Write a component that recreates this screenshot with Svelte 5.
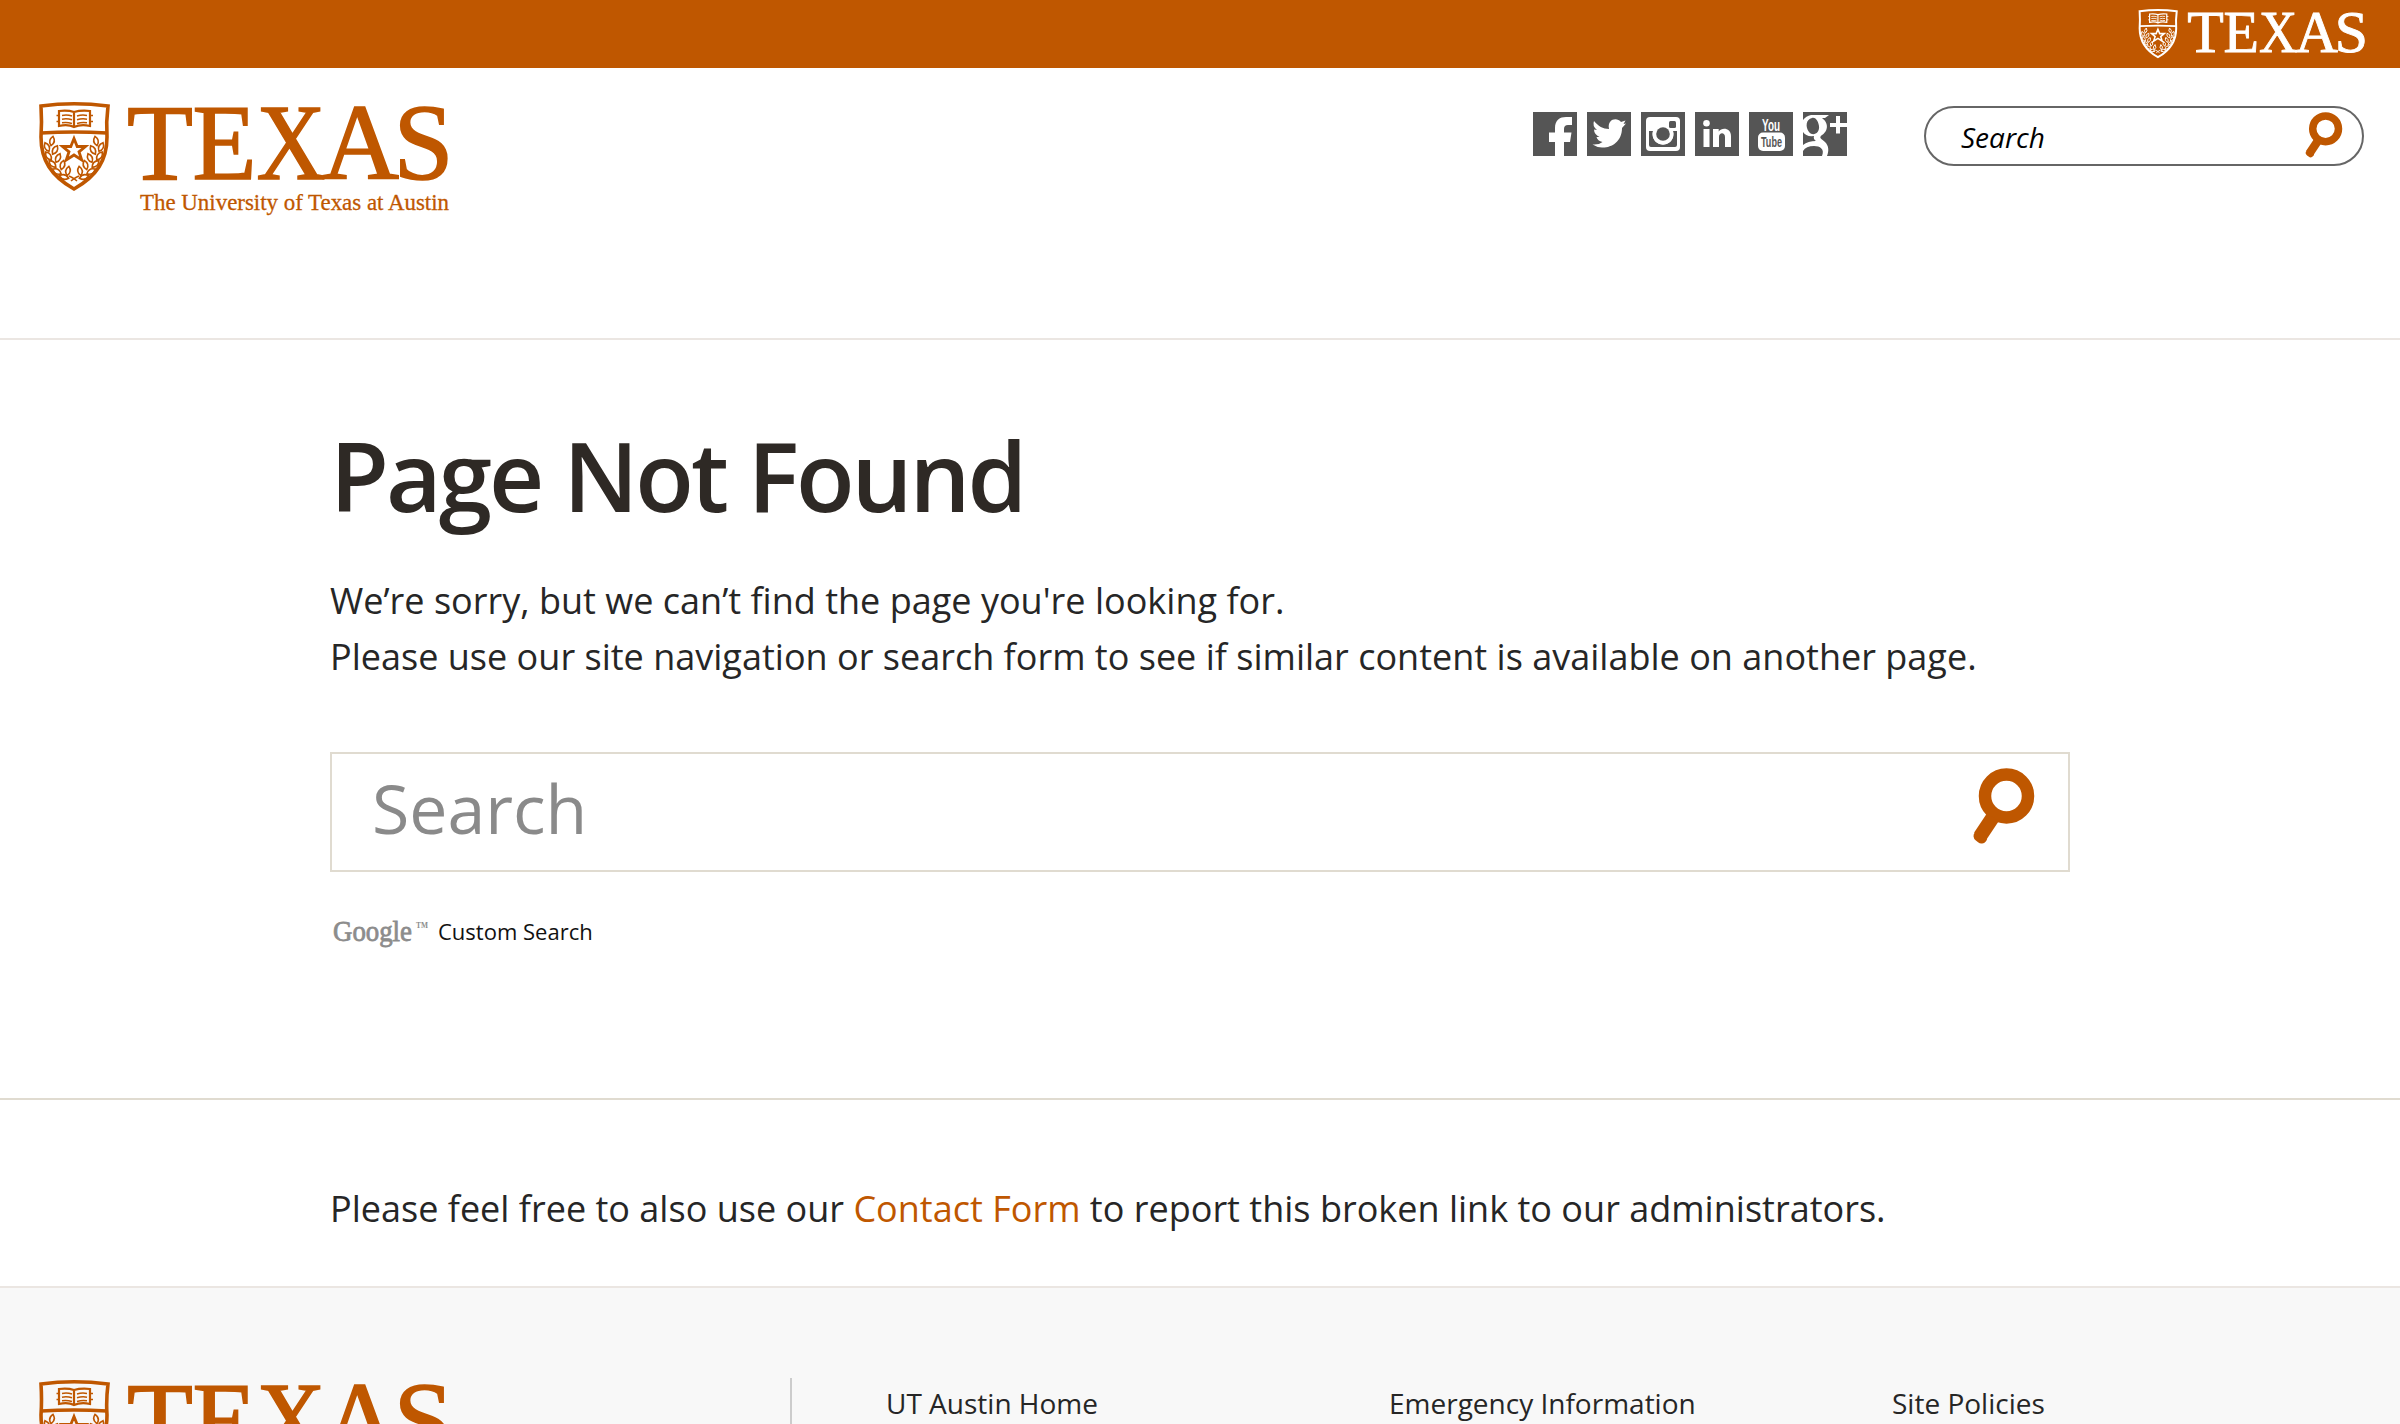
<script>
  const leaves = [
    [13, 39, 12], [8, 45, -25], [16, 48, 30], [9.5, 54, -35], [19, 56, 25],
    [13.5, 62, -45], [23.5, 63, 15], [18, 69.5, -60], [29, 69, 10], [25, 75, -75]
  ];
  const letters = [['T', 89, 66], ['E', 154.5, 64], ['X', 218.5, 69], ['A', 284, 77], ['S', 355.5, 60]];
  const LINKS = ['UT Austin Home', 'Emergency Information', 'Site Policies'];
</script>

{#snippet shield()}
  <g fill="none" stroke="currentColor" transform="translate(1 0)">
    <path stroke-width="3.6" d="M2 4Q35 -.5 69 4Q67 20 68 35C68 58 58 74 35 87C12 74 2 58 2 35Q3 20 2 4Z" />
    <path stroke-width="3.4" d="M2 31Q35 29 68 31" />
    <path stroke-width="2.2" d="M20 9Q29 8 35 10Q42 8 51 9V24Q42 22 35 25Q29 22 20 24ZM35 10V25" />
    <path stroke-width="1.5" d="M23 13.5Q28 12.5 33 14M23 17.2Q28 16.2 33 17.8M23 20.8Q28 20 33 21.5M38 14Q43 12.5 48 13.5M38 17.8Q43 16.2 48 17.2M38 21.5Q43 20 48 20.8M17.5 13.5H20M17.5 19.5H20M51 13.5H54M51 19.5H54" />
    <path stroke-width="2.8" d="M35 36.5L38.2 44.5H46.5L40 49.800L42.7 58L35 53L27.3 58L30 49.800L23.5 44.500H31.8Z" />
    {#each [1, -1] as side}
      <g transform={side === 1 ? '' : 'translate(70 0) scale(-1 1)'} stroke-width="1.6">
        <path d="M30 74Q33 75 38 79" />
        {#each leaves as [x, y, turn]}
          <path d="M0 -4.8Q4.6 0 0 4.8Q-4.6 0 0 -4.8Z" transform="translate({x} {y}) rotate({turn})" />
        {/each}
      </g>
    {/each}
  </g>
{/snippet}

{#snippet wordmark()}
  {#each letters as [letter, x, width]}
    <text class="texas" y="77.3" {x} textLength={width} lengthAdjust="spacingAndGlyphs">{letter}</text>
  {/each}
{/snippet}

{#snippet logo()}
  <svg class="logo" viewBox="0 0 412 116" aria-label="The University of Texas at Austin">
    {@render shield()}
    {@render wordmark()}
    <text class="tag" x="102" y="108" textLength="309" lengthAdjust="spacingAndGlyphs">The University of Texas at Austin</text>
  </svg>
{/snippet}

{#snippet glass()}
  <svg class="glass" viewBox="0 0 64 80">
    <circle cx="35.500" cy="28" r="21.500" />
    <path d="M22 49L9 68.500" />
    <path class="tip" d="M8 68L10.500 70" />
  </svg>
{/snippet}

<div class="topbar">
  <svg viewBox="0 0 412 89" aria-label="Texas">
    {@render shield()}
    {@render wordmark()}
  </svg>
</div>

<header>
  {@render logo()}
  <div class="tools">
    <nav class="social">
      <svg viewBox="0 0 44 44"><rect width="44" height="44" /><path class="w" d="M22 44V30H16V20.500H22V16C22 8 27 5 33 5H39V13H35Q31 13 31 17V20.500H38.500L37 30H31V44Z" /></svg>
      <svg viewBox="0 0 44 44"><rect width="44" height="44" /><path class="w" d="M7 9C11 14 16 17 22 17C20 7 30 5 34 10L38.500 8.500L36.500 12L39 11.500L35 16C35 30 24 36 15 35.500Q9 35 5.500 32.500Q12 33 15.500 30Q10.500 29 9.500 25H12.500Q7 22 7 17.500L10 18Q5 14 7 9Z" /></svg>
      <svg viewBox="0 0 44 44"><rect width="44" height="44" /><rect class="w" x="5" y="5" width="34" height="34" rx="4" /><path d="M8 19H12A10.500 10.500 0 1 0 32 19H36V33Q36 35 34 35H10Q8 35 8 33Z" /><circle class="w" cx="22" cy="22" r="10.500" /><circle cx="22" cy="22" r="6.800" /><rect x="28" y="9" width="7" height="7" rx="1.500" /></svg>
      <svg viewBox="0 0 44 44"><rect width="44" height="44" /><circle class="w" cx="11.500" cy="11.200" r="3.300" /><path class="w" d="M8.500 17H14.500V35H8.500ZM18 17H23.700V19.500C27 15 36 16 36 24V35H30V25C30 20 24 20 24 25V35H18Z" /></svg>
      <svg viewBox="0 0 44 44"><rect width="44" height="44" /><rect class="w" x="9" y="20.500" width="27" height="18.500" rx="5" /><text class="you" x="13" y="19" textLength="18" lengthAdjust="spacingAndGlyphs">You</text><text class="tube" x="12" y="35" textLength="21" lengthAdjust="spacingAndGlyphs">Tube</text></svg>
      <svg viewBox="0 0 44 44"><rect width="44" height="44" /><path class="w" fill-rule="evenodd" d="M8 3H26L22 6H19C27 12 24 20 19 23C15 26 19 27 22 30C26 34 26 39 24 44H19C22 37 17 34 11 34Q3 34 0 39V33Q5 29 13 29Q10 27 11 24Q3 25 0 20V8Q3 4 8 3ZM9 6C3 7 2 15 6 20C10 25 17 21 16 14C15 8 12 5 9 6ZM33 4H37V11H44V15H37V21.500H33V15H27V11H33Z" /></svg>
    </nav>
    <div class="search"><span>Search</span>{@render glass()}</div>
  </div>
</header>

<main>
  <h1>Page Not Found</h1>
  <p class="l1">We’re sorry, but we can’t find the page you're looking for.</p>
  <p class="l2">Please use our site navigation or search form to see if similar content is available on another page.</p>
  <div class="bigsearch"><span>Search</span>{@render glass()}</div>
  <div class="custom">
    <svg viewBox="0 0 98 32" aria-label="Google">
      <text class="google" x="0" y="23.500" textLength="79" lengthAdjust="spacingAndGlyphs">Google</text>
      <text class="tm" x="83" y="11" textLength="12" lengthAdjust="spacingAndGlyphs">TM</text>
    </svg>
    <span>Custom Search</span>
  </div>
</main>

<section class="contact">
  <p>Please feel free to also use our <a href="#contact">Contact Form</a> to report this broken link to our administrators.</p>
</section>

<footer>
  <div class="brand">{@render logo()}</div>
  <ul>
    {#each LINKS as link}<li>{link}</li>{/each}
  </ul>
</footer>

<style>
  :global(html) { overflow: hidden; }
  :global(body) { margin: 0; background: #fff; overflow: hidden; }
  :global(#app) { height: 1424px; overflow: hidden; font-family: 'Open Sans', sans-serif; color: #262626; }
  svg { display: block; overflow: visible; }
  p, h1, ul { margin: 0; padding: 0; white-space: nowrap; }

  .topbar { height: 68px; box-sizing: border-box; padding: 9px 34px 0 0; display: flex; justify-content: flex-end; align-items: flex-start; background: #bf5700; color: #fff; }
  .topbar svg { width: 228px; height: 49.300px; }

  header { height: 272px; box-sizing: border-box; border-bottom: 2px solid #ebe6e2; padding: 34px 36px 0 38px; display: flex; justify-content: space-between; align-items: flex-start; }
  .logo { width: 412px; height: 116px; color: #bf5700; }
  .texas { font: 108px 'Liberation Serif', serif; fill: currentColor; stroke: currentColor; stroke-width: 1.6; }
  .tag { font: 23px 'Liberation Serif', serif; fill: currentColor; stroke: currentColor; stroke-width: .3; }

  .tools { display: flex; gap: 77px; padding-top: 4px; }
  .social { display: flex; gap: 10px; padding-top: 6px; }
  .social svg { width: 44px; height: 44px; overflow: hidden; fill: #555; }
  .social .w, .social .you { fill: #fff; }
  .you, .tube { font: bold 17px 'Liberation Sans', sans-serif; }
  .tube { font-size: 15px; }
  .search { width: 440px; height: 60px; box-sizing: border-box; border: 2px solid #666; border-radius: 30px; padding: 0 19px 0 35px; display: flex; justify-content: space-between; align-items: center; font-size: 28px; font-style: italic; color: #000; }
  .search span { padding-top: 1px; }
  .glass { fill: none; stroke: #bf5700; stroke-width: 12.500; }
  .glass path { stroke-width: 14; }
  .glass .tip { stroke-width: 11; stroke-linecap: round; }
  .search .glass { width: 39px; height: 48px; }

  main { height: 760px; box-sizing: border-box; border-bottom: 2px solid #e0dbd0; padding: 70px 330px 0; }
  h1 { font-size: 96px; line-height: 130px; font-weight: 600; color: #2e2925; letter-spacing: -3px; }
  main p, .contact p { font-size: 36px; line-height: 56px; letter-spacing: .012px; }
  .l1 { margin-top: 33px; }
  .bigsearch { margin-top: 67px; height: 120px; box-sizing: border-box; border: 2px solid #e0dbd0; padding: 0 33px 8px 40px; display: flex; justify-content: space-between; align-items: center; font-size: 68px; line-height: 100px; color: #8a8a8a; }
  .bigsearch .glass { width: 64px; height: 80px; }
  .custom { display: flex; margin: 45px 0 0 3px; gap: 7px; font-size: 22px; line-height: 28px; color: #111; }
  .custom svg { width: 98px; height: 32px; }
  .google { font: 30px 'Liberation Serif', serif; fill: #8c8c8c; stroke: #8c8c8c; stroke-width: .8; }
  .tm { font: bold 9px 'Liberation Serif', serif; fill: #8c8c8c; }

  .contact { height: 186px; box-sizing: border-box; padding: 81px 330px 0; }
  a { color: #bf5700; text-decoration: none; }

  footer { height: 138px; box-sizing: border-box; border-top: 2px solid #ebe6e2; background: #f8f8f8; padding-top: 90px; display: flex; overflow: hidden; }
  .brand { width: 792px; box-sizing: border-box; padding: 2px 0 0 38px; border-right: 2px solid #ccc; }
  ul { list-style: none; display: grid; grid-template-columns: 503px 503px 503px; padding: 6px 0 0 94px; font-size: 28px; line-height: 38px; }
</style>
